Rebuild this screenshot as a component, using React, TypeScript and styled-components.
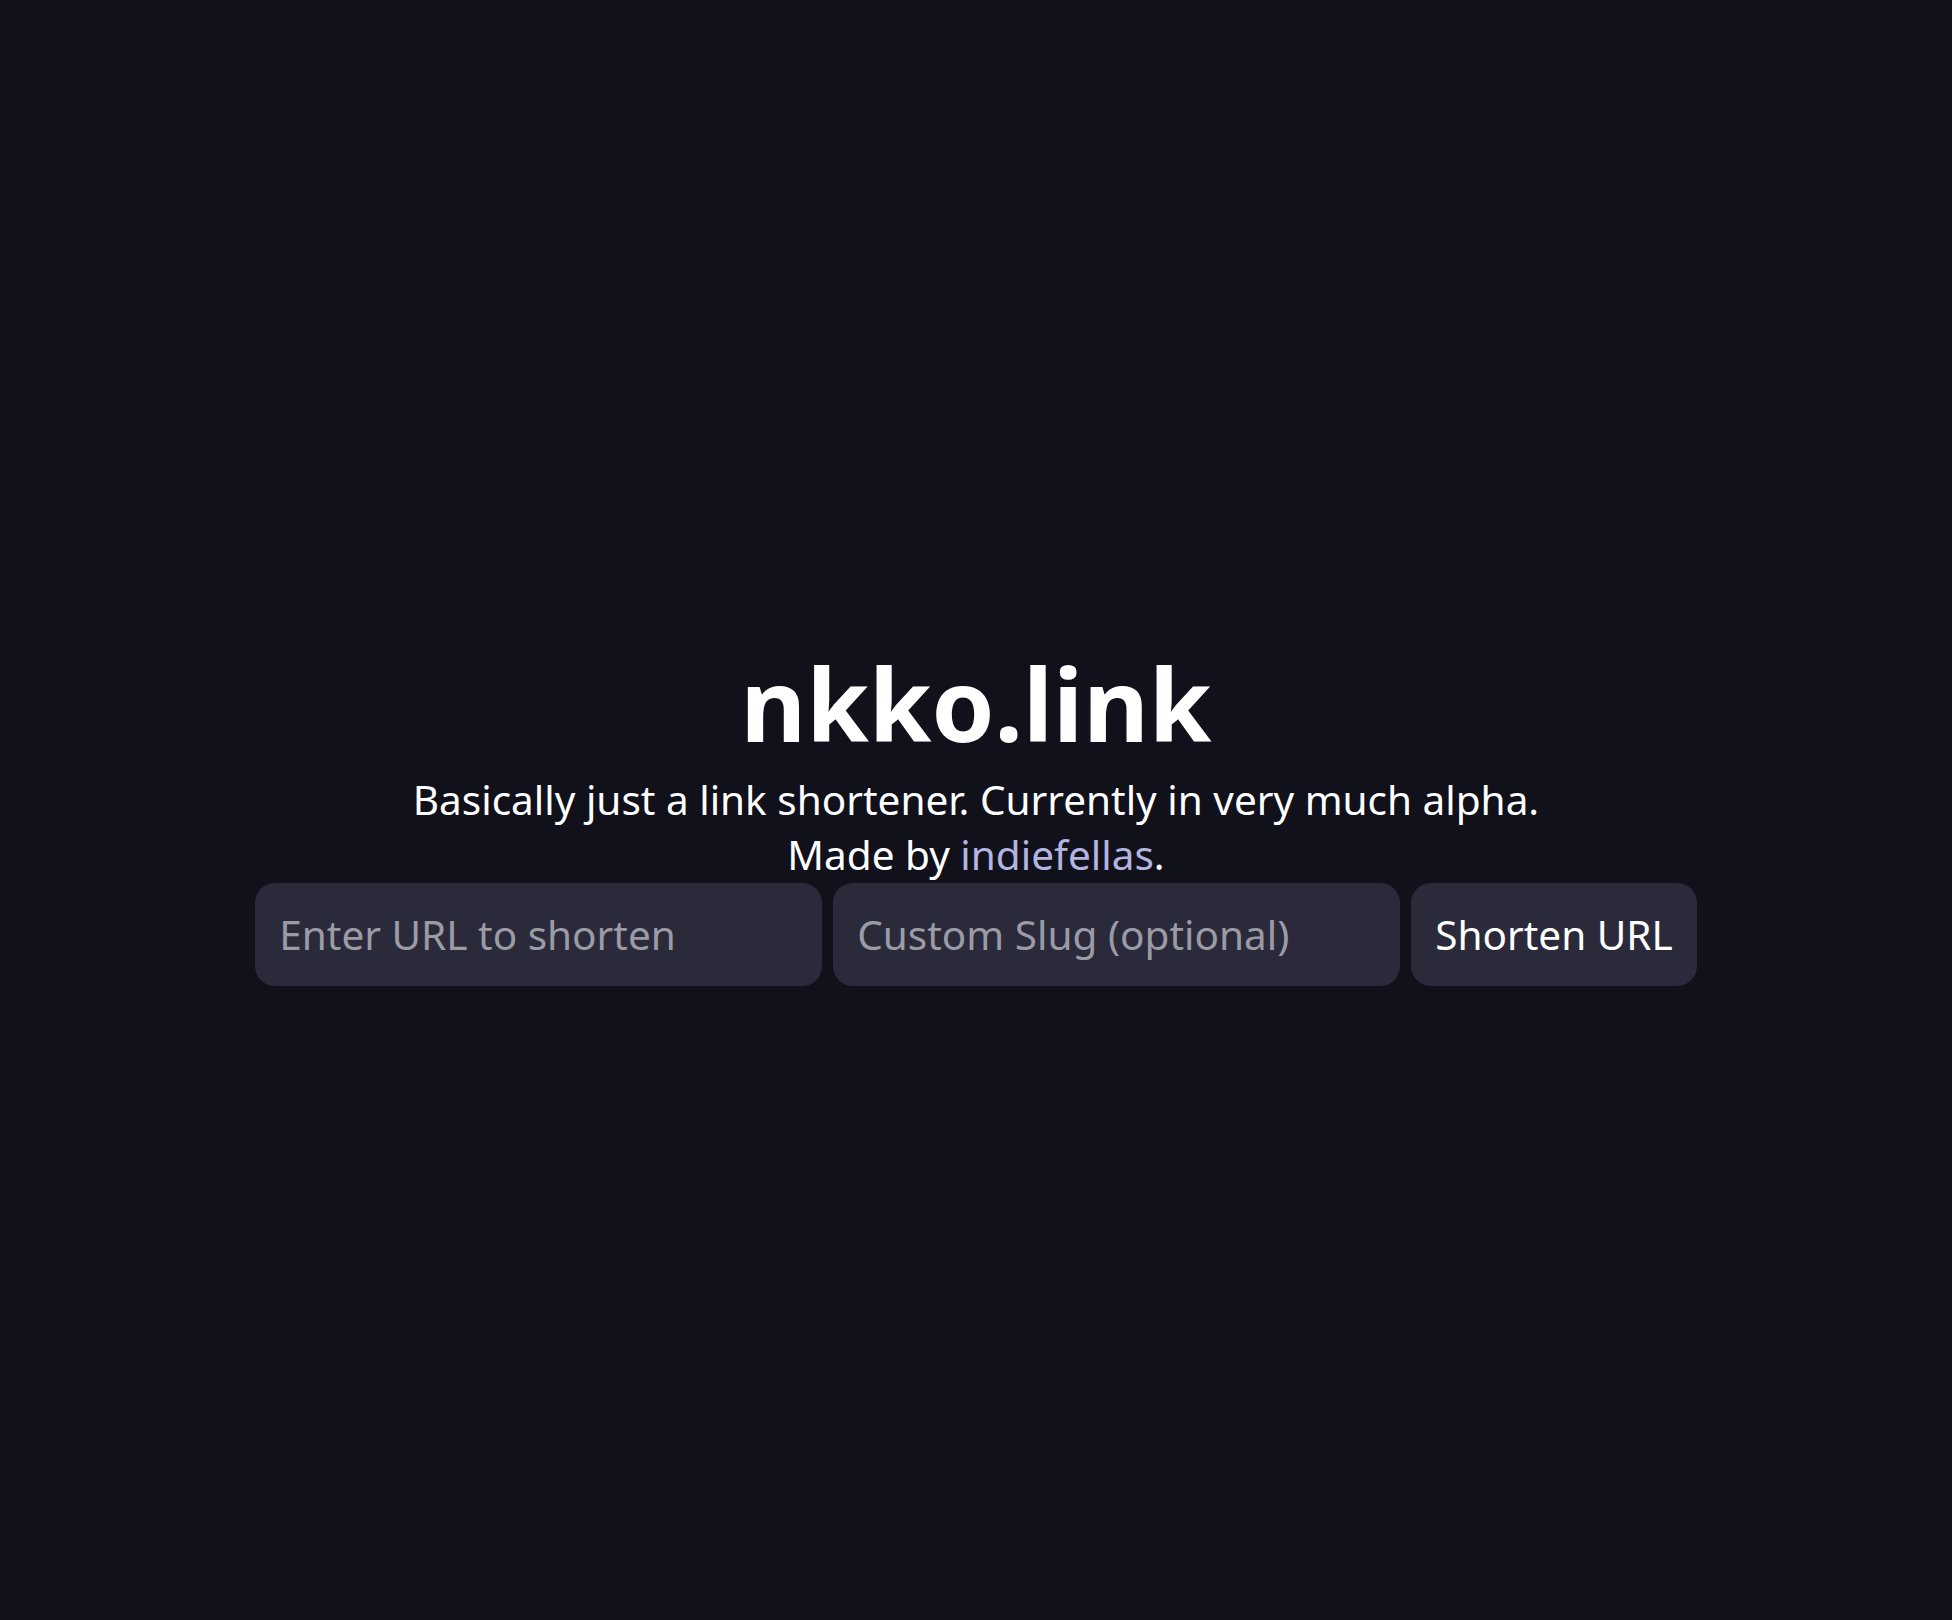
import React from "react";
import styled, { createGlobalStyle } from "styled-components";

const Global = createGlobalStyle`
  html, body {
    margin: 0;
    padding: 0;
    background: #11111b;
  }
  body {
    font-family: "Noto Sans", "Open Sans", sans-serif;
    color: #ffffff;
  }
  * { box-sizing: border-box; }
`;

const Page = styled.main`
  min-height: 100vh;
  display: flex;
  flex-direction: column;
  align-items: center;
  justify-content: center;
  text-align: center;
`;

const Title = styled.h1`
  margin: 0;
  font-size: 101px;
  font-weight: 700;
  line-height: normal;
  color: #ffffff;
`;

const Tagline = styled.p`
  margin: 0;
  font-size: 40.5px;
  line-height: normal;
  color: #ffffff;
`;

const Link = styled.a`
  color: #b4b4e0;
  text-decoration: none;
`;

const Form = styled.form`
  display: flex;
  gap: 11px;
  margin-top: 1px;
`;

const Field = styled.input`
  width: 567px;
  padding: 24px;
  border: none;
  outline: none;
  border-radius: 20px;
  background: #2a2a3b;
  color: #ffffff;
  font-family: "Noto Sans", sans-serif;
  font-size: 40.5px;
  line-height: normal;
  &::placeholder {
    color: #9b9ba5;
  }
`;

const Button = styled.button`
  padding: 24px;
  border: none;
  border-radius: 20px;
  background: #2a2a3b;
  color: #ffffff;
  font-family: "Noto Sans", sans-serif;
  font-size: 40.5px;
  line-height: normal;
  cursor: pointer;
`;

export default function App() {
  return (
    <>
      <Global />
      <Page>
        <Title>nkko.link</Title>
        <Tagline>Basically just a link shortener. Currently in very much alpha.</Tagline>
        <Tagline>
          Made by <Link href="#">indiefellas</Link>.
        </Tagline>
        <Form onSubmit={(e) => e.preventDefault()}>
          <Field type="text" placeholder="Enter URL to shorten" />
          <Field type="text" placeholder="Custom Slug (optional)" />
          <Button type="submit">Shorten URL</Button>
        </Form>
      </Page>
    </>
  );
}
